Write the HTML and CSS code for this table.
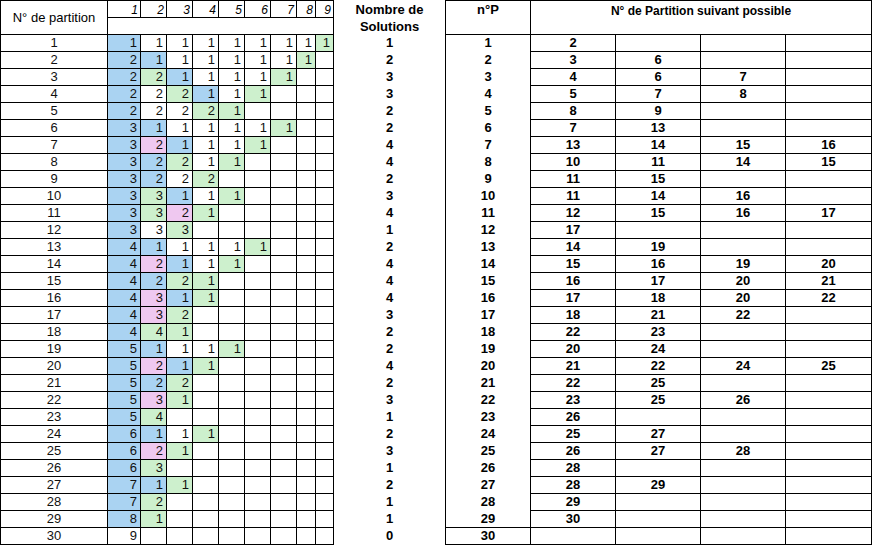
FILE: index.html
```html
<!DOCTYPE html>
<html lang="fr">
<head>
<meta charset="utf-8">
<title>Partitions</title>
<link rel="stylesheet" href="styles.css">
</head>
<body>
<div class="sheet">
  <div class="left">
    <div class="lgrid lhead">
      <div class="hname">N° de partition</div>
      <div class="hn">1</div><div class="hn">2</div><div class="hn">3</div><div class="hn">4</div><div class="hn">5</div><div class="hn">6</div><div class="hn">7</div><div class="hn">8</div><div class="hn">9</div>
      <div class="hblank"></div>
    </div>
    <div class="lgrid"><div class="c n">1</div><div class="c b">1</div><div class="c">1</div><div class="c">1</div><div class="c">1</div><div class="c">1</div><div class="c">1</div><div class="c">1</div><div class="c">1</div><div class="c g">1</div></div>
    <div class="lgrid"><div class="c n">2</div><div class="c b">2</div><div class="c b">1</div><div class="c">1</div><div class="c">1</div><div class="c">1</div><div class="c">1</div><div class="c">1</div><div class="c g">1</div><div class="c"></div></div>
    <div class="lgrid"><div class="c n">3</div><div class="c b">2</div><div class="c g">2</div><div class="c b">1</div><div class="c">1</div><div class="c">1</div><div class="c">1</div><div class="c g">1</div><div class="c"></div><div class="c"></div></div>
    <div class="lgrid"><div class="c n">4</div><div class="c b">2</div><div class="c">2</div><div class="c g">2</div><div class="c b">1</div><div class="c">1</div><div class="c g">1</div><div class="c"></div><div class="c"></div><div class="c"></div></div>
    <div class="lgrid"><div class="c n">5</div><div class="c b">2</div><div class="c">2</div><div class="c">2</div><div class="c g">2</div><div class="c g">1</div><div class="c"></div><div class="c"></div><div class="c"></div><div class="c"></div></div>
    <div class="lgrid"><div class="c n">6</div><div class="c b">3</div><div class="c b">1</div><div class="c">1</div><div class="c">1</div><div class="c">1</div><div class="c">1</div><div class="c g">1</div><div class="c"></div><div class="c"></div></div>
    <div class="lgrid"><div class="c n">7</div><div class="c b">3</div><div class="c p">2</div><div class="c b">1</div><div class="c">1</div><div class="c">1</div><div class="c g">1</div><div class="c"></div><div class="c"></div><div class="c"></div></div>
    <div class="lgrid"><div class="c n">8</div><div class="c b">3</div><div class="c b">2</div><div class="c g">2</div><div class="c">1</div><div class="c g">1</div><div class="c"></div><div class="c"></div><div class="c"></div><div class="c"></div></div>
    <div class="lgrid"><div class="c n">9</div><div class="c b">3</div><div class="c b">2</div><div class="c">2</div><div class="c g">2</div><div class="c"></div><div class="c"></div><div class="c"></div><div class="c"></div><div class="c"></div></div>
    <div class="lgrid"><div class="c n">10</div><div class="c b">3</div><div class="c g">3</div><div class="c b">1</div><div class="c">1</div><div class="c g">1</div><div class="c"></div><div class="c"></div><div class="c"></div><div class="c"></div></div>
    <div class="lgrid"><div class="c n">11</div><div class="c b">3</div><div class="c g">3</div><div class="c p">2</div><div class="c g">1</div><div class="c"></div><div class="c"></div><div class="c"></div><div class="c"></div><div class="c"></div></div>
    <div class="lgrid"><div class="c n">12</div><div class="c b">3</div><div class="c">3</div><div class="c g">3</div><div class="c"></div><div class="c"></div><div class="c"></div><div class="c"></div><div class="c"></div><div class="c"></div></div>
    <div class="lgrid"><div class="c n">13</div><div class="c b">4</div><div class="c b">1</div><div class="c">1</div><div class="c">1</div><div class="c">1</div><div class="c g">1</div><div class="c"></div><div class="c"></div><div class="c"></div></div>
    <div class="lgrid"><div class="c n">14</div><div class="c b">4</div><div class="c p">2</div><div class="c b">1</div><div class="c">1</div><div class="c g">1</div><div class="c"></div><div class="c"></div><div class="c"></div><div class="c"></div></div>
    <div class="lgrid"><div class="c n">15</div><div class="c b">4</div><div class="c b">2</div><div class="c g">2</div><div class="c g">1</div><div class="c"></div><div class="c"></div><div class="c"></div><div class="c"></div><div class="c"></div></div>
    <div class="lgrid"><div class="c n">16</div><div class="c b">4</div><div class="c p">3</div><div class="c b">1</div><div class="c g">1</div><div class="c"></div><div class="c"></div><div class="c"></div><div class="c"></div><div class="c"></div></div>
    <div class="lgrid"><div class="c n">17</div><div class="c b">4</div><div class="c p">3</div><div class="c g">2</div><div class="c"></div><div class="c"></div><div class="c"></div><div class="c"></div><div class="c"></div><div class="c"></div></div>
    <div class="lgrid"><div class="c n">18</div><div class="c b">4</div><div class="c g">4</div><div class="c g">1</div><div class="c"></div><div class="c"></div><div class="c"></div><div class="c"></div><div class="c"></div><div class="c"></div></div>
    <div class="lgrid"><div class="c n">19</div><div class="c b">5</div><div class="c b">1</div><div class="c">1</div><div class="c">1</div><div class="c g">1</div><div class="c"></div><div class="c"></div><div class="c"></div><div class="c"></div></div>
    <div class="lgrid"><div class="c n">20</div><div class="c b">5</div><div class="c p">2</div><div class="c b">1</div><div class="c g">1</div><div class="c"></div><div class="c"></div><div class="c"></div><div class="c"></div><div class="c"></div></div>
    <div class="lgrid"><div class="c n">21</div><div class="c b">5</div><div class="c b">2</div><div class="c g">2</div><div class="c"></div><div class="c"></div><div class="c"></div><div class="c"></div><div class="c"></div><div class="c"></div></div>
    <div class="lgrid"><div class="c n">22</div><div class="c b">5</div><div class="c p">3</div><div class="c g">1</div><div class="c"></div><div class="c"></div><div class="c"></div><div class="c"></div><div class="c"></div><div class="c"></div></div>
    <div class="lgrid"><div class="c n">23</div><div class="c b">5</div><div class="c g">4</div><div class="c"></div><div class="c"></div><div class="c"></div><div class="c"></div><div class="c"></div><div class="c"></div><div class="c"></div></div>
    <div class="lgrid"><div class="c n">24</div><div class="c b">6</div><div class="c b">1</div><div class="c">1</div><div class="c g">1</div><div class="c"></div><div class="c"></div><div class="c"></div><div class="c"></div><div class="c"></div></div>
    <div class="lgrid"><div class="c n">25</div><div class="c b">6</div><div class="c p">2</div><div class="c g">1</div><div class="c"></div><div class="c"></div><div class="c"></div><div class="c"></div><div class="c"></div><div class="c"></div></div>
    <div class="lgrid"><div class="c n">26</div><div class="c b">6</div><div class="c g">3</div><div class="c"></div><div class="c"></div><div class="c"></div><div class="c"></div><div class="c"></div><div class="c"></div><div class="c"></div></div>
    <div class="lgrid"><div class="c n">27</div><div class="c b">7</div><div class="c b">1</div><div class="c g">1</div><div class="c"></div><div class="c"></div><div class="c"></div><div class="c"></div><div class="c"></div><div class="c"></div></div>
    <div class="lgrid"><div class="c n">28</div><div class="c b">7</div><div class="c g">2</div><div class="c"></div><div class="c"></div><div class="c"></div><div class="c"></div><div class="c"></div><div class="c"></div><div class="c"></div></div>
    <div class="lgrid"><div class="c n">29</div><div class="c b">8</div><div class="c g">1</div><div class="c"></div><div class="c"></div><div class="c"></div><div class="c"></div><div class="c"></div><div class="c"></div><div class="c"></div></div>
    <div class="lgrid"><div class="c n">30</div><div class="c">9</div><div class="c"></div><div class="c"></div><div class="c"></div><div class="c"></div><div class="c"></div><div class="c"></div><div class="c"></div><div class="c"></div></div>
  </div>

  <div class="mid">
    <div class="mhead">Nombre de<br>Solutions</div>
    <div class="m">1</div><div class="m">2</div><div class="m">3</div><div class="m">3</div><div class="m">2</div>
    <div class="m">2</div><div class="m">4</div><div class="m">4</div><div class="m">2</div><div class="m">3</div>
    <div class="m">4</div><div class="m">1</div><div class="m">2</div><div class="m">4</div><div class="m">4</div>
    <div class="m">4</div><div class="m">3</div><div class="m">2</div><div class="m">2</div><div class="m">4</div>
    <div class="m">2</div><div class="m">3</div><div class="m">1</div><div class="m">2</div><div class="m">3</div>
    <div class="m">1</div><div class="m">2</div><div class="m">1</div><div class="m">1</div><div class="m">0</div>
  </div>

  <div class="right">
    <div class="rgrid">
      <div class="rh np-h">n°P</div>
      <div class="rh sv-h">N° de Partition suivant possible</div>

      <div class="np">1</div><div class="s">2</div><div class="s"></div><div class="s"></div><div class="s"></div>
      <div class="np">2</div><div class="s">3</div><div class="s">6</div><div class="s"></div><div class="s"></div>
      <div class="np">3</div><div class="s">4</div><div class="s">6</div><div class="s">7</div><div class="s"></div>
      <div class="np">4</div><div class="s">5</div><div class="s">7</div><div class="s">8</div><div class="s"></div>
      <div class="np">5</div><div class="s">8</div><div class="s">9</div><div class="s"></div><div class="s"></div>
      <div class="np">6</div><div class="s">7</div><div class="s">13</div><div class="s"></div><div class="s"></div>
      <div class="np">7</div><div class="s">13</div><div class="s">14</div><div class="s">15</div><div class="s">16</div>
      <div class="np">8</div><div class="s">10</div><div class="s">11</div><div class="s">14</div><div class="s">15</div>
      <div class="np">9</div><div class="s">11</div><div class="s">15</div><div class="s"></div><div class="s"></div>
      <div class="np">10</div><div class="s">11</div><div class="s">14</div><div class="s">16</div><div class="s"></div>
      <div class="np">11</div><div class="s">12</div><div class="s">15</div><div class="s">16</div><div class="s">17</div>
      <div class="np">12</div><div class="s">17</div><div class="s"></div><div class="s"></div><div class="s"></div>
      <div class="np">13</div><div class="s">14</div><div class="s">19</div><div class="s"></div><div class="s"></div>
      <div class="np">14</div><div class="s">15</div><div class="s">16</div><div class="s">19</div><div class="s">20</div>
      <div class="np">15</div><div class="s">16</div><div class="s">17</div><div class="s">20</div><div class="s">21</div>
      <div class="np">16</div><div class="s">17</div><div class="s">18</div><div class="s">20</div><div class="s">22</div>
      <div class="np">17</div><div class="s">18</div><div class="s">21</div><div class="s">22</div><div class="s"></div>
      <div class="np">18</div><div class="s">22</div><div class="s">23</div><div class="s"></div><div class="s"></div>
      <div class="np">19</div><div class="s">20</div><div class="s">24</div><div class="s"></div><div class="s"></div>
      <div class="np">20</div><div class="s">21</div><div class="s">22</div><div class="s">24</div><div class="s">25</div>
      <div class="np">21</div><div class="s">22</div><div class="s">25</div><div class="s"></div><div class="s"></div>
      <div class="np">22</div><div class="s">23</div><div class="s">25</div><div class="s">26</div><div class="s"></div>
      <div class="np">23</div><div class="s">26</div><div class="s"></div><div class="s"></div><div class="s"></div>
      <div class="np">24</div><div class="s">25</div><div class="s">27</div><div class="s"></div><div class="s"></div>
      <div class="np">25</div><div class="s">26</div><div class="s">27</div><div class="s">28</div><div class="s"></div>
      <div class="np">26</div><div class="s">28</div><div class="s"></div><div class="s"></div><div class="s"></div>
      <div class="np">27</div><div class="s">28</div><div class="s">29</div><div class="s"></div><div class="s"></div>
      <div class="np">28</div><div class="s">29</div><div class="s"></div><div class="s"></div><div class="s"></div>
      <div class="np ruled">29</div><div class="s">30</div><div class="s"></div><div class="s"></div><div class="s"></div>
      <div class="np ruled">30</div><div class="s"></div><div class="s"></div><div class="s"></div><div class="s"></div>
    </div>
  </div>
</div>
</body>
</html>
```

FILE: styles.css
```css
* { box-sizing: border-box; }

body {
  margin: 0;
  background: #fff;
  color: #000;
  font-family: "Liberation Sans", Arial, sans-serif;
}

.sheet {
  display: flex;
  align-items: flex-start;
}

/* ---------- left table ---------- */
.left {
  width: 334px;
  border-top: 1px solid #000;
  border-left: 1px solid #000;
}

.lgrid {
  display: grid;
  grid-template-columns: 107px 33px 26px 26px 26px 26px 26px 26px 19px 18px;
}

.lhead {
  grid-template-rows: 17px 17px;
}

.hname {
  grid-row: 1 / span 2;
  display: flex;
  align-items: center;
  justify-content: center;
  font-size: 13px;
  border-right: 1px solid #000;
  border-bottom: 1px solid #000;
  padding-bottom: 1px;
}

.hn {
  border-right: 1px solid #000;
  border-bottom: 1px solid #000;
  font-size: 12px;
  font-style: italic;
  text-align: right;
  padding: 2px 2px 0 0;
  line-height: 14px;
}

.hblank {
  grid-column: 2 / -1;
  border-right: 1px solid #000;
  border-bottom: 1px solid #000;
}

.c {
  height: 17px;
  border-right: 1px solid #000;
  border-bottom: 1px solid #000;
  font-size: 13px;
  line-height: 16px;
  text-align: right;
  padding-right: 3px;
  color: #111;
}

.c.n {
  text-align: center;
  padding-right: 0;
}

.b { background: #aad3f2; }
.p { background: #efc8f0; }
.g { background: #cdf0cd; }

/* ---------- middle column ---------- */
.mid {
  width: 111px;
  font-weight: bold;
  font-size: 13px;
  text-align: center;
}

.mhead {
  height: 35px;
  padding-top: 1px;
  line-height: 17px;
}

.m {
  height: 17px;
  line-height: 16px;
}

/* ---------- right table ---------- */
.right {
  border-top: 1px solid #000;
  border-left: 1px solid #000;
}

.rgrid {
  display: grid;
  grid-template-columns: 85px 85px 85px 85px 86px;
  font-weight: bold;
  font-size: 13px;
  text-align: center;
}

.rh {
  height: 34px;
  border-right: 1px solid #000;
  border-bottom: 1px solid #000;
  line-height: 17px;
}

.sv-h {
  grid-column: 2 / -1;
  font-size: 12px;
  padding-top: 2px;
}

.np {
  height: 17px;
  line-height: 16px;
  border-right: 1px solid #000;
}

.np.ruled {
  border-bottom: 1px solid #000;
}

.s {
  height: 17px;
  line-height: 16px;
  border-right: 1px solid #000;
  border-bottom: 1px solid #000;
}
```
